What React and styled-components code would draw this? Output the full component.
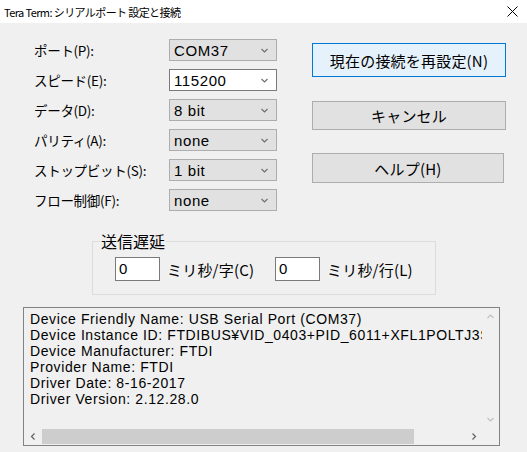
import React from 'react'
import styled, { createGlobalStyle } from 'styled-components'

const GlobalStyle = createGlobalStyle`
    html, body {
        margin: 0;
        padding: 0;
        background: #f0f0f0;
    }
    * { box-sizing: border-box; }
`

const jp = `"Noto Sans CJK JP", "Liberation Sans", sans-serif`
const latin = `"Liberation Sans", "Noto Sans CJK JP", sans-serif`

const Window = styled.div`
    width: 527px;
    height: 452px;
    background: #f0f0f0;
    font-family: ${jp};
    color: #000;
    overflow: hidden;
`

const TitleBar = styled.div`
    height: 23px;
    background: #fff;
    display: flex;
    align-items: center;
    justify-content: space-between;
    padding: 0 9px 0 4px;
    font-size: 11px;
    letter-spacing: -0.6px;
`

const Body = styled.div`
    padding: 16px 0 0 0;
`

const Top = styled.div`
    display: flex;
    align-items: flex-start;
`

const Form = styled.div`
    display: grid;
    grid-template-columns: 135px 108px;
    grid-auto-rows: 22px;
    row-gap: 8px;
    margin-left: 34px;
`

const Label = styled.div`
    display: flex;
    align-items: center;
    font-size: 13.5px;
    letter-spacing: -0.3px;
`

const Select = styled.div`
    display: flex;
    align-items: center;
    justify-content: space-between;
    padding: 0 8px 0 4px;
    border: 1px solid ${p => p.$focused ? '#7a7a7a' : '#adadad'};
    background: ${p => p.$focused ? '#fff' : '#e1e1e1'};
    font-family: ${latin};
    font-size: 15px;
    letter-spacing: 0.6px;
`

const Buttons = styled.div`
    display: flex;
    flex-direction: column;
    margin-left: 35px;
    margin-top: 4px;
`

const Button = styled.div`
    width: ${p => p.$w || 194}px;
    height: ${p => p.$h || 29}px;
    margin-bottom: ${p => p.$mb || 0}px;
    display: flex;
    align-items: center;
    justify-content: center;
    background: ${p => p.$primary ? '#e5f1fb' : '#e1e1e1'};
    border: 1px solid ${p => p.$primary ? '#0078d7' : '#adadad'};
    font-size: 15px;
    letter-spacing: 0.2px;
`

const Group = styled.fieldset`
    margin: 21px 0 0 92px;
    width: 341px;
    height: 63px;
    padding: 0;
    border: 1px solid #dcdcdc;
`

const Legend = styled.legend`
    font-size: 16px;
    padding: 0 1px;
    margin-left: 7px;
    line-height: 18px;
`

const FieldRow = styled.div`
    display: flex;
    align-items: center;
    padding: 7px 0 0 22px;
`

const Field = styled.div`
    width: 45px;
    height: 24px;
    background: #fff;
    border: 1px solid #7a7a7a;
    font-family: ${latin};
    font-size: 15px;
    padding: 2px 0 0 3px;
    margin-right: 7px;
`

const Unit = styled.span`
    font-size: 15px;
    width: 108px;
    letter-spacing: 0.2px;
`

const InfoBox = styled.div`
    margin: 12px 0 0 23px;
    width: 477px;
    height: 139px;
    border: 1px solid #828282;
    display: grid;
    grid-template-columns: 1fr 17px;
    grid-template-rows: 1fr 17px;
`

const InfoText = styled.div`
    padding: 3px 0 0 6px;
    overflow: hidden;
    white-space: nowrap;
    font-family: ${latin};
    font-size: 14px;
    letter-spacing: 0.6px;
    line-height: 16px;
`

const VBar = styled.div`
    display: flex;
    flex-direction: column;
    justify-content: space-between;
    align-items: center;
    padding: 6px 0;
`

const HBar = styled.div`
    display: flex;
    align-items: center;
`

const Arrow = styled.div`
    width: 17px;
    height: 17px;
    display: flex;
    align-items: center;
    justify-content: center;
    flex: none;
`

const Thumb = styled.div`
    height: 15px;
    width: 372px;
    background: #cdcdcd;
    margin-left: 1px;
`

const Chevron = ({ dir = 'down', color = '#606060', size = 7 }) => {
    const paths = {
        down: 'M0.5 1 L3.5 4 L6.5 1',
        up: 'M0.5 4 L3.5 1 L6.5 4',
        left: 'M4.5 0.5 L1.5 3.5 L4.5 6.5',
        right: 'M1.5 0.5 L4.5 3.5 L1.5 6.5',
    }
    const horiz = dir === 'left' || dir === 'right'
    return (
        <svg width={horiz ? 6 : size} height={horiz ? 7 : 5} viewBox={horiz ? '0 0 6 7' : '0 0 7 5'}>
            <path d={paths[dir]} fill="none" stroke={color} strokeWidth="1.2" />
        </svg>
    )
}

const rows = [
    ['ポート(P):', 'COM37'],
    ['スピード(E):', '115200', true],
    ['データ(D):', '8 bit'],
    ['パリティ(A):', 'none'],
    ['ストップビット(S):', '1 bit'],
    ['フロー制御(F):', 'none'],
]

const info = [
    'Device Friendly Name: USB Serial Port (COM37)',
    'Device Instance ID: FTDIBUS¥VID_0403+PID_6011+XFL1POLTJ3S>',
    'Device Manufacturer: FTDI',
    'Provider Name: FTDI',
    'Driver Date: 8-16-2017',
    'Driver Version: 2.12.28.0',
]

export default function App() {
    return (
        <Window>
            <GlobalStyle />
            <TitleBar>
                <span>Tera Term: シリアルポート 設定と接続</span>
                <svg width="11" height="11" viewBox="0 0 11 11">
                    <path d="M0.5 0.5 L10.5 10.5 M10.5 0.5 L0.5 10.5" stroke="#000" strokeWidth="1" />
                </svg>
            </TitleBar>
            <Body>
                <Top>
                    <Form>
                        {rows.map(([label, value, focused]) => (
                            <React.Fragment key={label}>
                                <Label>{label}</Label>
                                <Select $focused={focused}>
                                    <span>{value}</span>
                                    <Chevron color="#707070" />
                                </Select>
                            </React.Fragment>
                        ))}
                    </Form>
                    <Buttons>
                        <Button $primary $h={34} $mb={24}>現在の接続を再設定(N)</Button>
                        <Button $mb={23}>キャンセル</Button>
                        <Button $w={192} $h={30}>ヘルプ(H)</Button>
                    </Buttons>
                </Top>
                <Group>
                    <Legend>送信遅延</Legend>
                    <FieldRow>
                        <Field>0</Field>
                        <Unit>ミリ秒/字(C)</Unit>
                        <Field>0</Field>
                        <Unit>ミリ秒/行(L)</Unit>
                    </FieldRow>
                </Group>
                <InfoBox>
                    <InfoText>
                        {info.map(line => <div key={line}>{line}</div>)}
                    </InfoText>
                    <VBar>
                        <Chevron dir="up" color="#c0c0c0" />
                        <Chevron dir="down" color="#c0c0c0" />
                    </VBar>
                    <HBar>
                        <Arrow><Chevron dir="left" color="#606060" /></Arrow>
                        <Thumb />
                        <div style={{ flex: 1 }} />
                        <Arrow><Chevron dir="right" color="#606060" /></Arrow>
                    </HBar>
                    <div />
                </InfoBox>
            </Body>
        </Window>
    )
}
